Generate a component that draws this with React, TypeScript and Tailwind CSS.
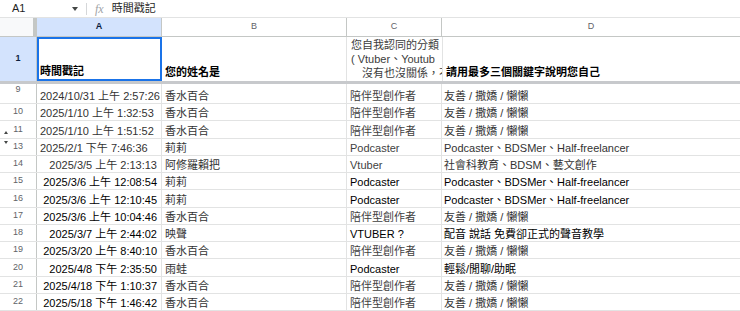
import React from "react";

type Row = {
  n: number;
  a: string;
  aRight?: boolean;
  aDark?: boolean;
  b: string;
  c: string;
  cDark?: boolean;
  d: string;
  dDark?: boolean;
  up?: boolean;
  down?: boolean;
};

const rows: Row[] = [
  { n: 10, a: "2025/1/10 上午 1:32:53", b: "香水百合", c: "陪伴型創作者", d: "友善 / 撒嬌 / 懶懶" },
  { n: 11, a: "2025/1/10 上午 1:51:52", b: "香水百合", c: "陪伴型創作者", d: "友善 / 撒嬌 / 懶懶", up: true },
  { n: 13, a: "2025/2/1 下午 7:46:36", b: "莉莉", c: "Podcaster", d: "Podcaster、BDSMer、Half-freelancer", down: true },
  { n: 14, a: "2025/3/5 上午 2:13:13", aRight: true, b: "阿修羅賴把", c: "Vtuber", d: "社會科教育、BDSM、藝文創作" },
  { n: 15, a: "2025/3/6 上午 12:08:54", aRight: true, aDark: true, b: "莉莉", c: "Podcaster", cDark: true, d: "Podcaster、BDSMer、Half-freelancer", dDark: true },
  { n: 16, a: "2025/3/6 上午 12:10:45", aRight: true, aDark: true, b: "莉莉", c: "Podcaster", cDark: true, d: "Podcaster、BDSMer、Half-freelancer", dDark: true },
  { n: 17, a: "2025/3/6 上午 10:04:46", aRight: true, aDark: true, b: "香水百合", c: "陪伴型創作者", d: "友善 / 撒嬌 / 懶懶" },
  { n: 18, a: "2025/3/7 上午 2:44:02", aRight: true, aDark: true, b: "映聲", c: "VTUBER ?", cDark: true, d: "配音 說話 免費卻正式的聲音教學", dDark: true },
  { n: 19, a: "2025/3/20 上午 8:40:10", aRight: true, aDark: true, b: "香水百合", c: "陪伴型創作者", d: "友善 / 撒嬌 / 懶懶" },
  { n: 20, a: "2025/4/8 下午 2:35:50", aRight: true, aDark: true, b: "雨蛙", c: "Podcaster", cDark: true, d: "輕鬆/閒聊/助眠", dDark: true },
  { n: 21, a: "2025/4/18 下午 1:10:37", aRight: true, aDark: true, b: "香水百合", c: "陪伴型創作者", d: "友善 / 撒嬌 / 懶懶" },
  { n: 22, a: "2025/5/18 下午 1:46:42", aRight: true, aDark: true, b: "香水百合", c: "陪伴型創作者", d: "友善 / 撒嬌 / 懶懶" },
];

const font = { fontFamily: '"Liberation Sans", "Noto Sans CJK TC", Arial, sans-serif' };

function DataRow({ r, tall }: { r: Row; tall?: boolean }) {
  const h = tall ? "h-[20px]" : "h-[17.25px]";
  return (
    <div className={`flex ${h} border-b border-[#e2e3e3]`}>
      <div
        className={`relative flex w-[37px] shrink-0 justify-center border-r border-[#c4c7c5] text-[9px] text-[#5f6368] ${
          tall ? "items-start pt-[1px] leading-[9px]" : "items-center"
        }`}
      >
        {r.n}
        {r.up && (
          <svg className="absolute left-[4px] bottom-[4px]" width="4" height="3" viewBox="0 0 4 3">
            <path d="M0 3 L2 0 L4 3 Z" fill="#444746" />
          </svg>
        )}
        {r.down && (
          <svg className="absolute left-[4px] top-[2px]" width="4" height="3" viewBox="0 0 4 3">
            <path d="M0 0 L4 0 L2 3 Z" fill="#444746" />
          </svg>
        )}
      </div>
      <div
        className={`flex w-[125px] shrink-0 items-end overflow-hidden whitespace-nowrap border-r border-[#e2e3e3] text-[11px] leading-[13px] ${
          r.aRight ? "justify-end pr-[4px]" : "justify-start pl-[3px]"
        } ${r.aDark ? "text-black" : "text-[#333333]"}`}
      >
        {r.a}
      </div>
      <div className="flex w-[185px] shrink-0 items-end overflow-hidden whitespace-nowrap border-r border-[#e2e3e3] pl-[3px] text-[11px] leading-[13px] text-[#333333]">
        {r.b}
      </div>
      <div
        className={`flex w-[95px] shrink-0 items-end overflow-hidden whitespace-nowrap border-r border-[#e2e3e3] pl-[3px] text-[11px] leading-[13px] ${
          r.cDark ? "text-black" : "text-[#3f3f3f]"
        }`}
      >
        {r.c}
      </div>
      <div
        className={`flex flex-1 items-end overflow-hidden whitespace-nowrap pl-[2px] text-[11px] leading-[13px] ${
          r.dDark ? "text-black" : "text-[#333333]"
        }`}
      >
        {r.d}
      </div>
    </div>
  );
}

export default function App() {
  return (
    <div className="h-[311px] w-[740px] overflow-hidden bg-white" style={font}>
      {/* formula bar */}
      <div className="flex h-[18px] items-center border-b border-[#e2e3e3] text-[11px] text-[#1f1f1f]">
        <div className="flex w-[86px] items-center pl-[12px]">
          <span>A1</span>
          <svg className="ml-auto mr-[8px]" width="6" height="4" viewBox="0 0 6 4">
            <path d="M0 0 L6 0 L3 4 Z" fill="#444746" />
          </svg>
        </div>
        <div className="h-[12px] w-px bg-[#d5d7d9]" />
        <span className="ml-[8px] mr-[8px] text-[12px] italic text-[#a0a3a6]" style={{ fontFamily: '"Liberation Serif", serif' }}>
          fx
        </span>
        <span>時間戳記</span>
      </div>

      {/* column headers */}
      <div className="flex h-[19px] border-b border-[#c4c7c5] text-[9px] text-[#5f6368]">
        <div className="w-[37px] shrink-0 border-r-[4px] border-[#c4c7c5] bg-[#f8f9fa]" />
        <div className="flex w-[125px] shrink-0 items-center justify-center border-r border-[#c4c7c5] bg-[#d3e3fd] font-bold text-[#0b1e3d]">
          A
        </div>
        <div className="flex w-[185px] shrink-0 items-center justify-center border-r border-[#c4c7c5]">B</div>
        <div className="flex w-[95px] shrink-0 items-center justify-center border-r border-[#c4c7c5]">C</div>
        <div className="flex flex-1 items-center justify-center">D</div>
      </div>

      {/* row 1 */}
      <div className="flex h-[44px]">
        <div className="flex w-[37px] shrink-0 items-center justify-center border-r border-[#c4c7c5] bg-[#d3e3fd] text-[9px] font-bold text-[#0b1e3d]">
          1
        </div>
        <div className="flex w-[125px] shrink-0 items-end border-2 border-[#1a73e8] pb-[1px] pl-[1px] text-[11px] font-bold leading-[13px] text-black">
          時間戳記
        </div>
        <div className="flex w-[185px] shrink-0 items-end border-r border-[#e2e3e3] pb-[2px] pl-[3px] text-[11px] font-bold leading-[13px] text-black">
          您的姓名是
        </div>
        <div className="flex w-[95px] shrink-0 flex-col justify-end overflow-hidden whitespace-nowrap pb-[1px] text-[11px] leading-[14px] text-[#3c3c3c]">
          <div className="pl-[4px]">您自我認同的分類</div>
          <div className="pl-[4px]">( Vtuber、Youtub</div>
          <div className="pl-[15px]">沒有也沒關係，不</div>
        </div>
        <div className="flex flex-1 items-end border-l border-[#e2e3e3] pb-[2px] pl-[3px] text-[11px] font-bold leading-[13px] text-black">
          請用最多三個關鍵字說明您自己
        </div>
      </div>

      {/* freeze bar */}
      <div className="h-[3px] bg-[#c7c9cc]" />

      <DataRow
        tall
        r={{ n: 9, a: "2024/10/31 上午 2:57:26", b: "香水百合", c: "陪伴型創作者", d: "友善 / 撒嬌 / 懶懶" }}
      />
      {rows.map((r) => (
        <DataRow key={r.n} r={r} />
      ))}
    </div>
  );
}
